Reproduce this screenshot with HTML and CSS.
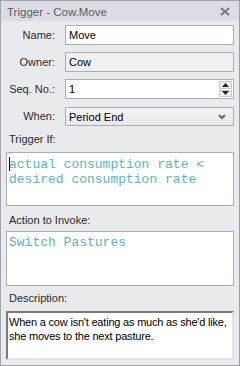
FILE: index.html
```html
<!DOCTYPE html>
<html>
<head>
<meta charset="utf-8">
<link rel="stylesheet" href="styles.css">
</head>
<body>
<div class="panel">
  <div class="titlebar">
    <span class="title">Trigger - Cow.Move</span>
    <svg class="close" width="10" height="9" viewBox="0 0 10 9"><path d="M1 1 L9 8 M9 1 L1 8" stroke="#7a7c85" stroke-width="2.2"/></svg>
  </div>
  <div class="content">
    <div class="form">
      <label class="lbl">Name:</label>
      <div class="field">Move</div>
      <label class="lbl">Owner:</label>
      <div class="field ro">Cow</div>
      <label class="lbl">Seq. No.:</label>
      <div class="field spin">
        <span class="val">1</span>
        <span class="spinbtns">
          <span class="sb"><svg width="7" height="4" viewBox="0 0 7 4"><path d="M3.5 0 L7 4 L0 4Z" fill="#222"/></svg></span>
          <span class="sb"><svg width="7" height="4" viewBox="0 0 7 4"><path d="M0 0 L7 0 L3.5 4Z" fill="#222"/></svg></span>
        </span>
      </div>
      <label class="lbl">When:</label>
      <div class="field select">
        <span class="val">Period End</span>
        <svg class="chev" width="8" height="6" viewBox="0 0 8 6"><path d="M1 1 L4 4 L7 1" stroke="#666" stroke-width="2" fill="none"/></svg>
      </div>
    </div>
    <div class="sec-label l1">Trigger If:</div>
    <div class="code box trig"><span class="caret"></span>actual consumption rate &lt;<br>desired consumption rate</div>
    <div class="sec-label l2">Action to Invoke:</div>
    <div class="code box act">Switch Pastures</div>
    <div class="sec-label l3">Description:</div>
    <div class="desc box">When a cow isn't eating as much as she'd like, she moves to the next pasture.</div>
  </div>
</div>
</body>
</html>
```
FILE: styles.css
```css
html, body {
  margin: 0;
  padding: 0;
  background: #ffffff;
}
.panel {
  width: 240px;
  height: 366px;
  box-sizing: border-box;
  border: 1px solid #a3a4ab;
  border-right-color: #9c9da5;
  background: #e9eaee;
  display: flex;
  flex-direction: column;
  font-family: "Liberation Sans", Arial, sans-serif;
  font-size: 11px;
  color: #1e1e1e;
}
.titlebar {
  height: 20px;
  flex: none;
  background: #dcdde2;
  display: flex;
  align-items: center;
  justify-content: space-between;
  padding: 0 9px 0 6px;
  font-size: 11.5px;
  color: #5a5b62;
}
.title { padding-top: 1px; }
.close { display: block; }
.content {
  flex: 1;
  display: flex;
  flex-direction: column;
  padding: 4px 5px 0 5px;
}
.form {
  display: grid;
  grid-template-columns: 49px 1fr;
  column-gap: 10px;
  row-gap: 7px;
  align-items: center;
  font-size: 11px;
}
.lbl {
  text-align: right;
  color: #2a2a2a;
  white-space: nowrap;
}
.field {
  height: 20px;
  box-sizing: border-box;
  border: 1px solid #abadb3;
  background: #fff;
  display: flex;
  align-items: center;
  padding: 0 3px;
  color: #000;
}
.field.ro { background: #f0f0f0; }
.field.spin { padding-right: 1px; justify-content: space-between; }
.spinbtns {
  display: flex;
  flex-direction: column;
  width: 13px;
  height: 16px;
  gap: 1px;
}
.sb {
  flex: 1;
  background: #ececec;
  border: 1px solid #c9cacf;
  display: flex;
  align-items: center;
  justify-content: center;
}
.sb svg { display: block; }
.field.select {
  height: 19px;
  margin-top: 1px;
  background: linear-gradient(#f4f4f4, #e8e8e8);
  border-color: #acacac;
  justify-content: space-between;
  padding-right: 7px;
}
.sec-label {
  font-size: 11px;
  line-height: 13px;
  color: #2a2a2a;
  padding-left: 3px;
}
.l1 { margin-top: 7px; margin-bottom: 6px; }
.l2 { margin-top: 8px; margin-bottom: 4px; }
.l3 { margin-top: 6px; margin-bottom: 6px; }
.box {
  box-sizing: border-box;
  border: 1px solid #abadb3;
  background: #fff;
  flex: none;
}
.code {
  font-family: "Liberation Mono", "Courier New", monospace;
  font-size: 13px;
  line-height: 15px;
  color: #5cb5b8;
  padding: 4px 2px;
}
.trig { height: 54px; position: relative; }
.act { height: 55px; padding-top: 3px; }
.caret {
  position: absolute;
  left: 2px;
  top: 4px;
  width: 1px;
  height: 14px;
  background: #000;
}
.desc {
  height: 49px;
  border: 2px solid;
  border-color: #7a7a7a #e3e3e3 #e3e3e3 #7a7a7a;
  font-size: 11px;
  letter-spacing: -0.2px;
  line-height: 14px;
  color: #000;
  padding: 2px 0 2px 1px;
}
```
